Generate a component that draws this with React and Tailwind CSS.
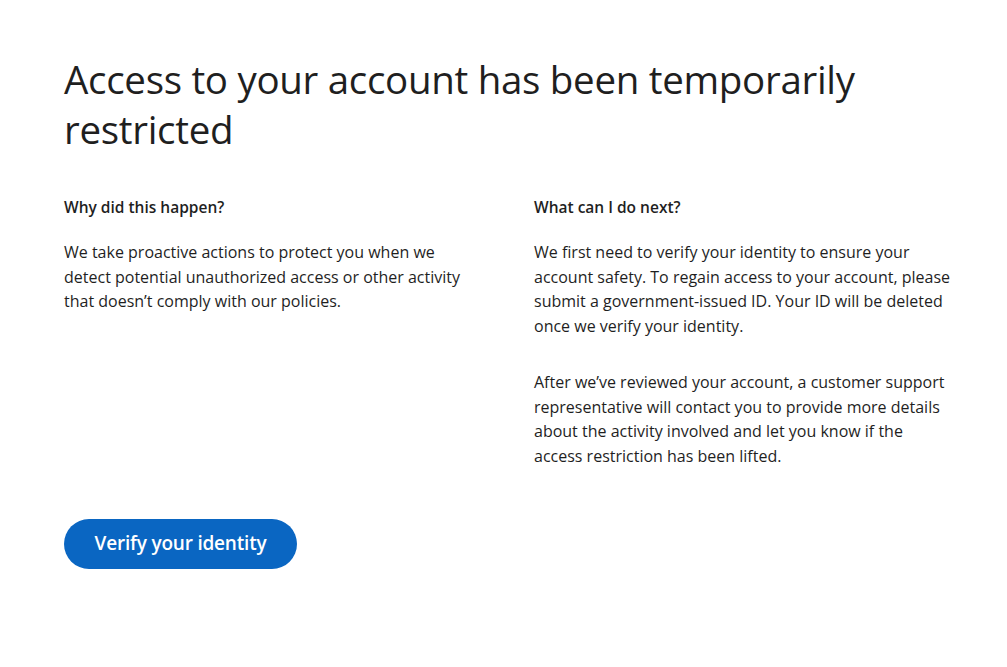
export default function App() {
  return (
    <div
      className="min-h-screen bg-white text-[#1f1f1f]"
      style={{ fontFamily: '"Open Sans", "Noto Sans", sans-serif' }}
    >
      <div className="pl-16 pt-[54px] w-[940px]">
        <h1 className="text-[38.5px] leading-[50px] font-normal tracking-[-0.3px] w-[820px]">
          Access to your account has been temporarily restricted
        </h1>

        <div className="mt-[41px] grid grid-cols-[418px_418px] gap-[52px]">
          {/* Left column */}
          <div>
            <h3 className="text-[15.5px] font-semibold leading-[25px]">Why did this happen?</h3>
            <p className="mt-[20px] text-[16px] leading-[24.7px]">
              We take proactive actions to protect you when we detect potential unauthorized access or other activity
              that doesn’t comply with our policies.
            </p>
          </div>

          {/* Right column */}
          <div>
            <h3 className="text-[15.5px] font-semibold leading-[25px]">What can I do next?</h3>
            <p className="mt-[20px] text-[16px] leading-[24.7px]">
              We first need to verify your identity to ensure your account safety. To regain access to your account,
              please submit a government-issued ID. Your ID will be deleted once we verify your identity.
            </p>
            <p className="mt-[31px] text-[16px] leading-[24.7px]">
              After we’ve reviewed your account, a customer support representative will contact you to provide more
              details about the activity involved and let you know if the access restriction has been lifted.
            </p>
          </div>
        </div>

        <button className="mt-[50px] h-[50px] w-[233px] rounded-full bg-[#0a66c2] text-white text-[19px] font-semibold tracking-[-0.2px]">
          Verify your identity
        </button>
      </div>
    </div>
  );
}
